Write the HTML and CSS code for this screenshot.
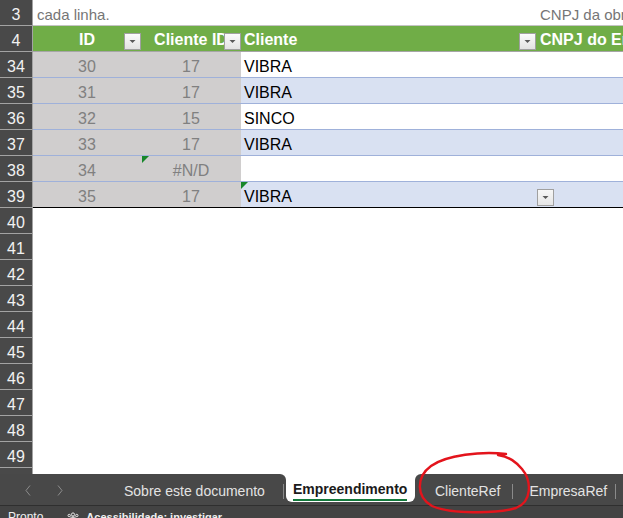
FILE: index.html
```html
<!DOCTYPE html>
<html lang="pt">
<head>
<meta charset="utf-8">
<title>Empreendimento</title>
<link rel="stylesheet" href="styles.css">
</head>
<body>
<div class="sheet">
  <div class="row r3">
    <div class="rh">3</div>
    <div class="c ca">cada linha.</div>
    <div class="c cb"></div>
    <div class="c cc"></div>
    <div class="c cd">CNPJ da obr</div>
  </div>
  <div class="row hd">
    <div class="rh">4</div>
    <div class="c ca ctr">ID<span class="fbtn"><svg viewBox="0 0 15 15" width="15" height="15"><polygon points="4.5,6 10.5,6 7.5,9" fill="#595959"/></svg></span></div>
    <div class="c cb ctr">Cliente ID<span class="fbtn"><svg viewBox="0 0 15 15" width="15" height="15"><polygon points="4.5,6 10.5,6 7.5,9" fill="#595959"/></svg></span></div>
    <div class="c cc">Cliente<span class="fbtn fbtn-c"><svg viewBox="0 0 15 15" width="15" height="15"><polygon points="4.5,6 10.5,6 7.5,9" fill="#595959"/></svg></span></div>
    <div class="c cd">CNPJ do Empreendimento</div>
  </div>
  <div class="row dt">
    <div class="rh">34</div>
    <div class="c ca g">30</div>
    <div class="c cb g">17</div>
    <div class="c cc">VIBRA</div>
    <div class="c cd"></div>
  </div>
  <div class="row dt band">
    <div class="rh">35</div>
    <div class="c ca g">31</div>
    <div class="c cb g">17</div>
    <div class="c cc">VIBRA</div>
    <div class="c cd"></div>
  </div>
  <div class="row dt">
    <div class="rh">36</div>
    <div class="c ca g">32</div>
    <div class="c cb g">15</div>
    <div class="c cc">SINCO</div>
    <div class="c cd"></div>
  </div>
  <div class="row dt band">
    <div class="rh">37</div>
    <div class="c ca g">33</div>
    <div class="c cb g">17</div>
    <div class="c cc">VIBRA</div>
    <div class="c cd"></div>
  </div>
  <div class="row dt">
    <div class="rh">38</div>
    <div class="c ca g">34</div>
    <div class="c cb g err err1">#N/D</div>
    <div class="c cc"></div>
    <div class="c cd"></div>
  </div>
  <div class="row dt band last">
    <div class="rh">39</div>
    <div class="c ca g">35</div>
    <div class="c cb g">17</div>
    <div class="c cc err">VIBRA</div>
    <div class="c cd"><span class="dvbtn"><svg viewBox="0 0 15 15" width="15" height="15"><polygon points="4.5,6 10.5,6 7.5,9" fill="#595959"/></svg></span></div>
  </div>
  <div class="row em"><div class="rh">40</div></div>
  <div class="row em"><div class="rh">41</div></div>
  <div class="row em"><div class="rh">42</div></div>
  <div class="row em"><div class="rh">43</div></div>
  <div class="row em"><div class="rh">44</div></div>
  <div class="row em"><div class="rh">45</div></div>
  <div class="row em"><div class="rh">46</div></div>
  <div class="row em"><div class="rh">47</div></div>
  <div class="row em"><div class="rh">48</div></div>
  <div class="row em"><div class="rh">49</div></div>
  <div class="row em"><div class="rh"></div></div>
</div>
<div class="tabbar">
  <div class="tb-left">
    <svg class="nav nav1" viewBox="0 0 6 11" width="6" height="11"><path d="M5 0.5 L1 5.5 L5 10.5" fill="none" stroke="#8c8c8c" stroke-width="1"/></svg>
    <svg class="nav nav2" viewBox="0 0 6 11" width="6" height="11"><path d="M1 0.5 L5 5.5 L1 10.5" fill="none" stroke="#8c8c8c" stroke-width="1"/></svg>
    <span class="tab t1">Sobre este documento</span>
    <span class="sep s1"></span>
  </div>
  <div class="tab-wrap">
    <div class="tab-active"><span class="tab-name">Empreendimento</span></div>
  </div>
  <div class="tb-right">
    <span class="tab t2">ClienteRef</span>
    <span class="sep s2"></span>
    <span class="tab t3">EmpresaRef</span>
    <span class="sep s3"></span>
  </div>
</div>
<div class="status">
  <span class="st-ready">Pronto</span>
  <svg class="st-icon" viewBox="0 0 12 12" width="12" height="12"><circle cx="6" cy="2.5" r="1.6" fill="none" stroke="#e6e6e6" stroke-width="1"/><circle cx="2.2" cy="3.5" r="1.2" fill="none" stroke="#e6e6e6" stroke-width="1"/><circle cx="9.8" cy="3.5" r="1.2" fill="none" stroke="#e6e6e6" stroke-width="1"/><path d="M3.4 5.2 L8.6 5.2 M6 4.2 L6 9 M6 9 L4 12 M6 9 L8 12" fill="none" stroke="#e6e6e6" stroke-width="1"/></svg>
  <span class="st-acc">Acessibilidade: investigar</span>
</div>
<svg class="annot" viewBox="0 0 623 518" width="623" height="518">
  <path d="M506 454 C482 451, 446 455, 431 466 C416 477, 416 497, 432 506 C450 514, 496 514, 516 508 C532 502, 532 481, 522 469 C516 462, 510 457, 498 455" fill="none" stroke="#e3141c" stroke-width="2.4" stroke-linecap="round"/>
</svg>
</body>
</html>
```

FILE: styles.css
```css
* { box-sizing: border-box; }
html, body { margin: 0; padding: 0; }
body {
  width: 623px;
  height: 518px;
  overflow: hidden;
  position: relative;
  background: #ffffff;
  font-family: "Liberation Sans", Arial, sans-serif;
}

.sheet { height: 474px; overflow: hidden; }

.row { display: flex; height: 26px; }

.rh {
  flex: none;
  width: 33px;
  height: 26px;
  background: #494949;
  color: #f2f2f2;
  border-right: 1px solid #a3a3a3;
  border-bottom: 1px solid #a3a3a3;
  font-size: 16px;
  line-height: 21px;
  padding-top: 4px;
  text-align: center;
}

.c {
  flex: none;
  height: 26px;
  position: relative;
  border-bottom: 1px solid transparent;
  font-size: 16px;
  line-height: 21px;
  padding-top: 4px;
  padding-left: 3px;
  white-space: nowrap;
  overflow: hidden;
  color: #000;
}
.ca { width: 108px; }
.cb { width: 100px; }
.cc { width: 296px; }
.cd { flex: 1 1 auto; min-width: 0; }

.ctr, .g { text-align: center; padding-left: 0; }

/* row 3 */
.r3 .c {
  border-bottom-color: #c4c4c4;
  font-size: 15px;
  line-height: 20px;
  padding-top: 5px;
  color: #767676;
}
.r3 .ca { padding-left: 4px; }

/* header row */
.hd .c {
  background: #70ad47;
  color: #ffffff;
  font-weight: bold;
  border-bottom-color: #a6a6a6;
  padding-top: 3px;
}

.fbtn, .dvbtn {
  position: absolute;
  top: 7px;
  right: 0;
  width: 17px;
  height: 17px;
  border: 1px solid #a0a0a0;
  background: linear-gradient(#fbfbfb, #e2e2e2);
  display: flex;
}
.fbtn-c { right: 1px; }
.dvbtn { left: 0; right: auto; background: linear-gradient(#f7f7f7, #e6e6e6); }

/* data rows */
.dt .c { border-bottom-color: #9fb1da; }
.dt .g { background: #d0cece; color: #808080; }
.band .cc, .band .cd { background: #d9e1f2; }
.last .c { border-bottom-color: #000000; }

.err::before {
  content: "";
  position: absolute;
  left: 0;
  top: 0;
  border-top: 7px solid #17872b;
  border-right: 7px solid transparent;
}
.err1::before { left: 1px; }

/* tab bar */
.tabbar {
  display: flex;
  height: 31px;
  background: #ffffff;
}
.tb-left, .tb-right {
  display: flex;
  align-items: center;
  background: #484848;
  padding-top: 3px;
  color: #e3e3e3;
  font-size: 14px;
}
.tb-left { flex: none; width: 286px; border-top-right-radius: 6px; }
.tb-right { flex: 1 1 auto; border-top-left-radius: 6px; }

.nav { flex: none; margin-top: -2px; }
.nav1 { margin-left: 25px; }
.nav2 { margin-left: 26px; }
.tab { white-space: nowrap; line-height: 16px; }
.t1 { margin-left: 61px; }
.t2 { margin-left: 20px; }
.t3 { margin-left: 16px; }
.sep { flex: none; width: 1px; height: 15px; background: #8a8a8a; }
.s1 { margin-left: 18px; }
.s2 { margin-left: 12px; }
.s3 { margin-left: 8px; }

.tab-wrap {
  flex: none;
  width: 129px;
  background: linear-gradient(#ffffff 50%, #484848 50%);
}
.tab-active {
  height: 28px;
  background: #ffffff;
  border-radius: 0 0 6px 6px;
  padding-top: 6px;
  padding-left: 7px;
}
.tab-name {
  display: inline-block;
  font-size: 14px;
  font-weight: bold;
  line-height: 16px;
  color: #1b1b1b;
  padding-bottom: 2px;
  border-bottom: 2px solid #137a3c;
  white-space: nowrap;
}

/* status bar */
.status {
  display: flex;
  align-items: flex-start;
  height: 13px;
  overflow: hidden;
  background: #434343;
  border-top: 1px solid #2f2f2f;
  padding-left: 8px;
  padding-top: 4px;
  color: #f0f0f0;
  font-size: 12px;
  line-height: 14px;
}
.st-icon { flex: none; margin-left: 24px; margin-top: 2px; }
.st-acc { margin-left: 7px; font-weight: bold; font-size: 11px; white-space: nowrap; }

.annot {
  position: absolute;
  left: 0;
  top: 0;
  pointer-events: none;
}
```
